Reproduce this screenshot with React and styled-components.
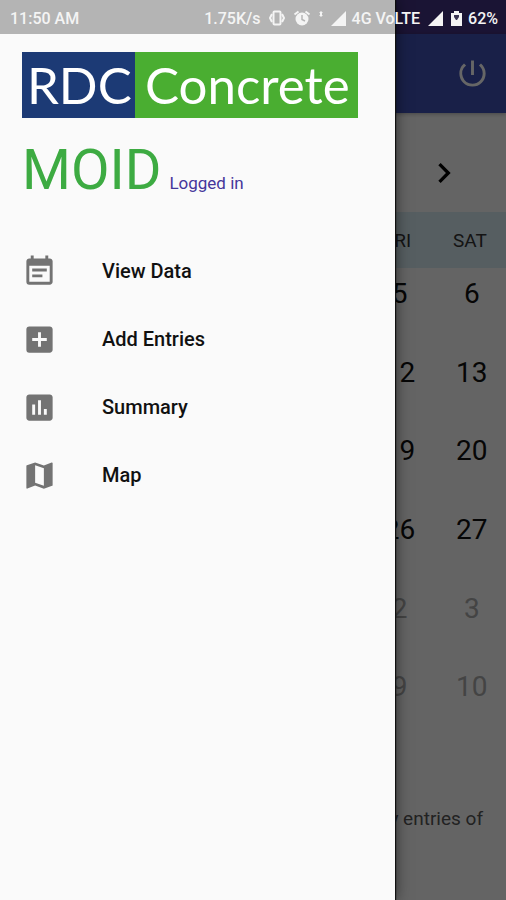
import React from 'react';
import styled, { createGlobalStyle } from 'styled-components';
import {
  MdAddBox,
  MdAssessment,
  MdChevronRight,
  MdEventNote,
  MdMap,
  MdPowerSettingsNew
} from 'react-icons/md';

const menuItems = [
  { label: 'View Data', icon: MdEventNote },
  { label: 'Add Entries', icon: MdAddBox },
  { label: 'Summary', icon: MdAssessment },
  { label: 'Map', icon: MdMap }
];

const weekDays = ['SUN', 'MON', 'TUE', 'WED', 'THU', 'FRI', 'SAT'];

// Columns that lie fully under the open drawer
const coveredColumns = 5;

const GlobalStyle = createGlobalStyle`
  * {
    box-sizing: border-box;
  }

  body {
    margin: 0;
    font-family: Roboto, 'Liberation Sans', sans-serif;
  }

  button {
    border: none;
    background: none;
    padding: 0;
    font: inherit;
    cursor: pointer;
  }
`;

const Shell = styled.div`
  position: relative;
  min-height: 100vh;
  overflow: hidden;
  background: #fafafa;
`;

const TopStrip = styled.div`
  height: 34px;
  background: #5e46b4;
`;

const AppBar = styled.header`
  display: flex;
  align-items: center;
  justify-content: flex-end;
  height: 79px;
  padding: 0 16px;
  background: #3f51b5;
  box-shadow: 0 1px 4px rgba(0, 0, 0, 0.3);
`;

const IconButton = styled.button`
  display: flex;
  color: ${(props) => props.$color};
`;

const MonthBar = styled.div`
  display: flex;
  align-items: center;
  justify-content: flex-end;
  height: 99px;
  padding: 20px 42px 0;
`;

const Calendar = styled.table`
  width: 100%;
  height: 528px;
  table-layout: fixed;
  border-collapse: collapse;
`;

const WeekRow = styled.tr`
  background: #d7eaf2;
`;

const WeekDay = styled.th`
  height: 56px;
  padding: 0;
  font-size: 19px;
  font-weight: 400;
  color: #333;
  visibility: ${(props) => (props.$covered ? 'hidden' : 'visible')};
`;

const Day = styled.td`
  padding: 9px 0 0 4px;
  vertical-align: top;
  text-align: center;
  font-size: 28px;
  line-height: 34px;
  color: ${(props) => (props.$muted ? '#aaa' : '#111')};
  visibility: ${(props) => (props.$covered ? 'hidden' : 'visible')};
`;

const Hint = styled.p`
  margin: 0;
  padding: 67px 23px 0;
  text-align: right;
  font-size: 19px;
  line-height: 24px;
  color: #555;
`;

const Scrim = styled.div`
  position: absolute;
  inset: 0;
  background: rgba(0, 0, 0, 0.6);
`;

const Drawer = styled.aside`
  position: absolute;
  top: 0;
  bottom: 0;
  left: 0;
  width: 78%;
  padding: 52px 22px 0;
  background: #fafafa;
  box-shadow: 1px 0 1px #111, 0 0 14px rgba(0, 0, 0, 0.6);
`;

const Logo = styled.div`
  display: flex;
  width: 336px;
  max-width: 100%;
  height: 66px;
  font-family: Lato, 'Liberation Sans', sans-serif;
  font-size: 51px;
  line-height: 65px;
  color: #fff;
`;

const LogoPart = styled.span`
  flex: ${(props) => props.$grow};
  padding-left: 2px;
  text-align: center;
  background: ${(props) => props.$color};
`;

const User = styled.div`
  display: flex;
  align-items: baseline;
  gap: 8px;
  margin-top: 19px;
`;

const UserName = styled.h1`
  margin: 0;
  font-size: 56px;
  line-height: 66px;
  font-weight: 400;
  color: #3dab42;
`;

const UserStatus = styled.span`
  font-size: 17px;
  color: #45369a;
`;

const Menu = styled.nav`
  display: flex;
  flex-direction: column;
  margin-top: 34px;
`;

const MenuButton = styled.button`
  display: flex;
  align-items: center;
  gap: 45px;
  height: 68px;
  text-align: left;

  svg {
    color: #737373;
  }
`;

const MenuLabel = styled.span`
  font-size: 20px;
  font-weight: 500;
  color: #111;
`;

const StatusBar = styled.div`
  position: absolute;
  top: 0;
  left: 0;
  right: 0;
  display: flex;
  align-items: center;
  height: 34px;
  padding: 2px 8px 0 10px;
  background: rgba(0, 0, 0, 0.28);
  font-size: 16px;
  font-weight: 500;
  color: #f4f4f4;
`;

const StatusIcons = styled.div`
  display: flex;
  align-items: center;
  gap: 8px;
  margin-left: auto;
`;

const StatusPair = styled.span`
  display: flex;
  align-items: center;
  gap: 6px;
`;

function VibrateIcon() {
  return (
    <svg width="16" height="16" viewBox="0 0 16 16" fill="none" stroke="currentColor">
      <rect x="4.5" y="1.5" width="7" height="13" rx="1" strokeWidth="2" />
      <path d="M3 4L1 8l2 4M13 4l2 4-2 4" strokeWidth="2" />
    </svg>
  );
}

function AlarmIcon() {
  return (
    <svg width="18" height="16" viewBox="0 0 18 16">
      <circle cx="9" cy="9" r="6.5" fill="currentColor" />
      <path d="M1.5 4.5l4-3M16.5 4.5l-4-3" stroke="currentColor" strokeWidth="2" />
      <path d="M9 5v4.5l3 1.5" fill="none" stroke="#b5b5b5" strokeWidth="1.5" />
    </svg>
  );
}

function DataIcon() {
  return (
    <svg width="4" height="16" viewBox="0 0 4 16" fill="currentColor">
      <path d="M2 1l2 2H3v2h1L2 7 0 5h1V3H0z" />
    </svg>
  );
}

function SignalIcon() {
  return (
    <svg width="15" height="15" viewBox="0 0 15 15" fill="currentColor">
      <path d="M15 0v15H0z" />
    </svg>
  );
}

function BatteryIcon() {
  return (
    <svg width="11" height="15" viewBox="0 0 11 15">
      <path d="M3 0h5v2h3v13H0V2h3z" fill="currentColor" />
      <path d="M3 4h5v2L6 9H5L3 6z" fill="#3b3654" />
    </svg>
  );
}

// Six rows of days, starting on the last Sunday before the month
function getWeeks(year, month) {
  const offset = new Date(year, month, 1).getDay();

  return Array.from({ length: 6 }, (_, week) =>
    weekDays.map((_, day) => {
      const date = new Date(year, month, 1 - offset + week * 7 + day);
      return { day: date.getDate(), muted: date.getMonth() !== month };
    })
  );
}

function CalendarPage() {
  return (
    <>
      <TopStrip />
      <AppBar>
        <IconButton $color="#fff" aria-label="Log out">
          <MdPowerSettingsNew size={35} />
        </IconButton>
      </AppBar>
      <MonthBar>
        <IconButton $color="#000" aria-label="Next month">
          <MdChevronRight size={40} />
        </IconButton>
      </MonthBar>
      <Calendar>
        <thead>
          <WeekRow>
            {weekDays.map((name, column) => (
              <WeekDay key={name} $covered={column < coveredColumns}>
                {name}
              </WeekDay>
            ))}
          </WeekRow>
        </thead>
        <tbody>
          {getWeeks(2018, 0).map((week, index) => (
            <tr key={index}>
              {week.map((item, column) => (
                <Day
                  key={item.day}
                  $muted={item.muted}
                  $covered={column < coveredColumns}
                >
                  {item.day}
                </Day>
              ))}
            </tr>
          ))}
        </tbody>
      </Calendar>
      <Hint>daily entries of</Hint>
    </>
  );
}

function App() {
  return (
    <Shell>
      <GlobalStyle />
      <CalendarPage />
      <Scrim />
      <Drawer>
        <Logo>
          <LogoPart $grow={1} $color="#1c3a75">RDC</LogoPart>
          <LogoPart $grow={2} $color="#4aae31">Concrete</LogoPart>
        </Logo>
        <User>
          <UserName>MOID</UserName>
          <UserStatus>Logged in</UserStatus>
        </User>
        <Menu>
          {menuItems.map(({ label, icon: Icon }) => (
            <MenuButton key={label}>
              <Icon size={35} />
              <MenuLabel>{label}</MenuLabel>
            </MenuButton>
          ))}
        </Menu>
      </Drawer>
      <StatusBar>
        <span>11:50 AM</span>
        <StatusIcons>
          <span>1.75K/s</span>
          <VibrateIcon />
          <AlarmIcon />
          <DataIcon />
          <StatusPair>
            <SignalIcon />
            <span>4G VoLTE</span>
          </StatusPair>
          <SignalIcon />
          <StatusPair>
            <BatteryIcon />
            <span>62%</span>
          </StatusPair>
        </StatusIcons>
      </StatusBar>
    </Shell>
  );
}

export default App;
